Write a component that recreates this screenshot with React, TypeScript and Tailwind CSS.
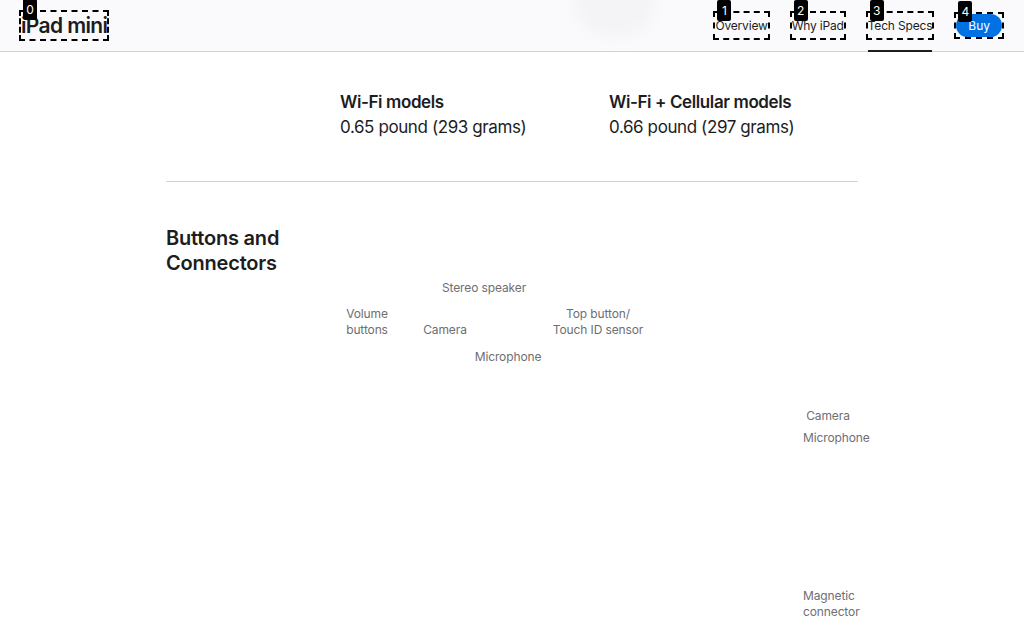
import React from 'react';

const FONT = { fontFamily: 'Inter, "Liberation Sans", sans-serif' };

// numbered dashed marker drawn over an element
const Mark: React.FC<{ n: number; children: React.ReactNode }> = ({ n, children }) => (
  <span className="relative inline-flex outline-2 outline-dashed outline-black">
    {children}
    <span className="absolute -top-[13px] left-[2px] w-[14px] text-center bg-black text-white text-[12px] leading-[21px] rounded-[2px] z-10 tracking-normal">
      {n}
    </span>
  </span>
);

const labels: { text: string[]; left: number; top: number; center?: boolean }[] = [
  { text: ['Stereo speaker'], left: 318, top: 4, center: true },
  { text: ['Volume', 'buttons'], left: 201, top: 30, center: true },
  { text: ['Camera'], left: 279, top: 46, center: true },
  { text: ['Top button/', 'Touch ID sensor'], left: 432, top: 30, center: true },
  { text: ['Microphone'], left: 342, top: 73, center: true },
  { text: ['Camera'], left: 662, top: 132, center: true },
  { text: ['Microphone'], left: 637, top: 154 },
  { text: ['Magnetic', 'connector'], left: 637, top: 312 },
];

export default function App() {
  return (
    <div className="min-h-screen bg-white text-[#1d1d1f] overflow-hidden" style={FONT}>
      {/* Local nav */}
      <header className="relative h-[52px] bg-[#fafafc] border-b border-[#d2d2d7] flex items-center justify-between pl-[21px] pr-[22px]">
        <div className="absolute left-[575px] -top-[30px] w-[80px] h-[66px] rounded-full bg-[#f4f4f6] blur-[6px]"></div>
        <Mark n={0}>
          <span className="text-[21px] font-semibold leading-[27px] tracking-[-0.03em]">iPad mini</span>
        </Mark>
        <nav className="relative flex items-center gap-6 h-full text-[12px] tracking-[-0.015em]">
          <Mark n={1}>
            <a className="leading-[25px]">Overview</a>
          </Mark>
          <Mark n={2}>
            <a className="leading-[25px]">Why iPad</a>
          </Mark>
          <div className="relative h-full flex items-center">
            <Mark n={3}>
              <a className="leading-[25px]">Tech Specs</a>
            </Mark>
            <span className="absolute left-[0px] right-[0px] -bottom-[1px] h-[2px] bg-[#1d1d1f]"></span>
          </div>
          <Mark n={4}>
            <button className="bg-[#0071e3] text-white leading-[23px] px-[12px] rounded-full tracking-normal">Buy</button>
          </Mark>
        </nav>
      </header>

      <main className="w-[692px] mx-auto">
        {/* Weight */}
        <section className="grid grid-cols-[174px_269px_1fr] pt-[38px] pb-[41px] border-b border-[#d2d2d7] tracking-[-0.025em]">
          <div></div>
          <div>
            <h4 className="text-[17px] font-semibold leading-[25px]">Wi-Fi models</h4>
            <p className="text-[17px] leading-[25px]">0.65 pound (293 grams)</p>
          </div>
          <div>
            <h4 className="text-[17px] font-semibold leading-[25px]">Wi-Fi + Cellular models</h4>
            <p className="text-[17px] leading-[25px]">0.66 pound (297 grams)</p>
          </div>
        </section>

        {/* Buttons and Connectors */}
        <section className="pt-[44px]">
          <h3 className="text-[20px] font-semibold leading-[25px] w-[150px] tracking-[-0.01em]">Buttons and Connectors</h3>
          <div className="relative h-[360px]">
            {labels.map((l, i) => (
              <div
                key={i}
                className={`absolute text-[12px] leading-[16px] text-[#6e6e73] whitespace-nowrap tracking-[-0.01em] ${l.center ? '-translate-x-1/2 text-center' : ''}`}
                style={{ left: l.left, top: l.top }}
              >
                {l.text.map((t) => (
                  <div key={t}>{t}</div>
                ))}
              </div>
            ))}
          </div>
        </section>
      </main>
    </div>
  );
}
